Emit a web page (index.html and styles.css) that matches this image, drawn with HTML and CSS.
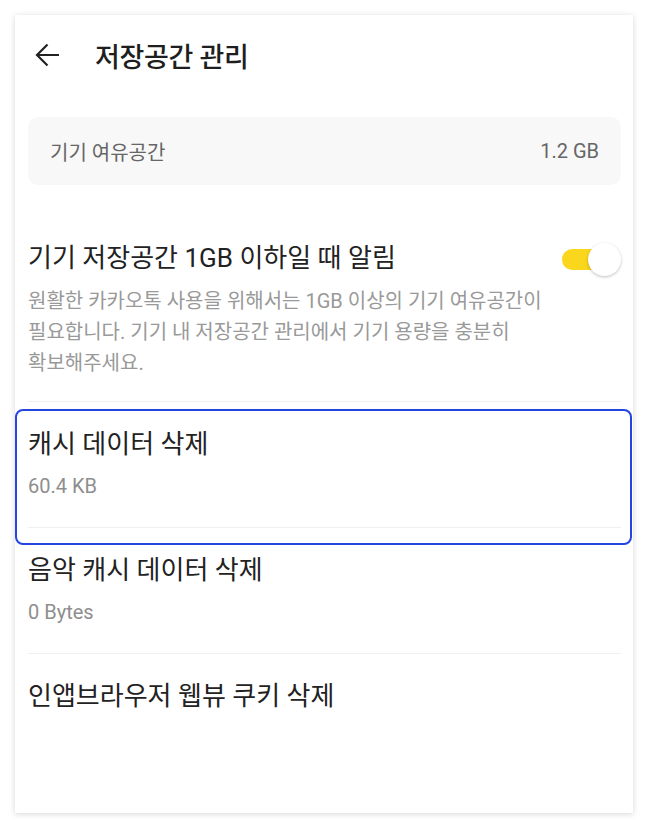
FILE: index.html
```html
<!DOCTYPE html>
<html lang="ko">

<head>
    <meta charset="UTF-8">
    <meta name="viewport" content="width=device-width, initial-scale=1.0">
    <title>저장공간 관리</title>
    <link rel="stylesheet" href="styles.css">
</head>

<body>
    <div class="card">
        <div class="header">
            <svg class="back" width="28" height="28" viewBox="0 0 28 28">
                <path d="M26 14H4M14.5 3.5L4 14l10.5 10.5" fill="none" stroke="#222" stroke-width="2.2"/>
            </svg>
            <div class="page-title">저장공간 관리</div>
        </div>

        <div class="free-box">
            <span class="label">기기 여유공간</span>
            <span class="value">1.2 GB</span>
        </div>

        <div class="alert-row">
            <div class="alert-top">
                <div class="row-title">기기 저장공간 1GB 이하일 때 알림</div>
                <div class="toggle on">
                    <div class="knob"></div>
                </div>
            </div>
            <div class="desc">원활한 카카오톡 사용을 위해서는 1GB 이상의 기기 여유공간이<br>필요합니다. 기기 내 저장공간 관리에서 기기 용량을 충분히<br>확보해주세요.</div>
        </div>

        <div class="item focused">
            <div class="row-title">캐시 데이터 삭제</div>
            <div class="sub">60.4 KB</div>
            <div class="focus-ring"></div>
        </div>
        <div class="item">
            <div class="row-title">음악 캐시 데이터 삭제</div>
            <div class="sub">0 Bytes</div>
        </div>
        <div class="item last">
            <div class="row-title">인앱브라우저 웹뷰 쿠키 삭제</div>
        </div>
    </div>
</body>

</html>
```

FILE: styles.css
```css
body {
    margin: 0;
    background: #fff;
    font-family: Roboto, "Noto Sans CJK KR", sans-serif;
    color: #222;
}

.card {
    margin: 15px;
    height: 798px;
    padding: 0 12px 0 13px;
    background: #fff;
    box-shadow: 0 1px 6px rgba(0, 0, 0, 0.16);
    box-sizing: border-box;
}

.header {
    display: flex;
    align-items: center;
    height: 80px;
}

.header .back {
    margin-left: 5px;
}

.page-title {
    margin-left: 34px;
    font-size: 27px;
    font-weight: 500;
    letter-spacing: -0.3px;
    color: #1e1e1e;
}

.free-box {
    display: flex;
    justify-content: space-between;
    align-items: center;
    margin-top: 22px;
    height: 68px;
    padding: 0 22px;
    background: #f8f8f8;
    border-radius: 10px;
}

.free-box .label,
.free-box .value {
    font-size: 20px;
    color: #666;
}

.alert-row {
    padding: 54px 0 22px;
    border-bottom: 1px solid #f0f0f0;
}

.alert-top {
    display: flex;
    justify-content: space-between;
    align-items: center;
}

.row-title {
    font-size: 26px;
    line-height: 34px;
    color: #222;
}

.desc {
    margin-top: 10px;
    font-size: 20px;
    line-height: 31px;
    color: #999;
}

.toggle {
    position: relative;
    width: 61px;
    height: 33px;
    margin-top: 4px;
}

.toggle::before {
    content: "";
    position: absolute;
    left: 2px;
    top: 6px;
    width: 56px;
    height: 21px;
    border-radius: 11px;
    background: #fad61c;
}

.toggle .knob {
    position: absolute;
    right: 0;
    top: 0;
    width: 33px;
    height: 33px;
    border-radius: 50%;
    background: #fff;
    box-shadow: 0 1px 3px rgba(0, 0, 0, 0.25);
}

.item {
    position: relative;
    height: 126px;
    padding-top: 25px;
    border-bottom: 1px solid #f0f0f0;
    box-sizing: border-box;
}

.item.last {
    border-bottom: none;
}

.item .sub {
    margin-top: 11px;
    font-size: 20px;
    line-height: 28px;
    color: #8e8e8e;
}

.focus-ring {
    position: absolute;
    left: -13px;
    right: -11px;
    top: 7px;
    height: 136px;
    border: 2px solid #2545e0;
    border-radius: 8px;
    box-sizing: border-box;
}
```
